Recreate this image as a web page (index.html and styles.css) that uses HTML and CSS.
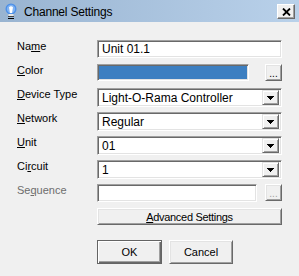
FILE: index.html
```html
<!DOCTYPE html>
<html>
<head>
<meta charset="utf-8">
<link rel="stylesheet" href="styles.css">
</head>
<body>
<div class="window">
  <div class="titlebar">
    <svg class="appicon" width="12" height="17" viewBox="0 0 12 17">
      <circle cx="6" cy="6" r="5.5" fill="#4b8fe8"/>
      <circle cx="6" cy="6" r="4.2" fill="#7fb2f2"/>
      <path d="M4 4.2 Q6 2.2 8 4.2 L7 10 H5 Z" fill="#fff"/>
      <rect x="3.5" y="11" width="5" height="2" fill="#e6e6e6"/>
      <rect x="3" y="13" width="6" height="1" fill="#444"/>
      <rect x="3" y="15" width="6" height="1" fill="#000"/>
    </svg>
    <span class="title">Channel Settings</span>
    <button class="closebtn" type="button">
      <svg width="9" height="8" viewBox="0 0 9 8"><path d="M1 0.5 L8 7.5 M8 0.5 L1 7.5" stroke="#000" stroke-width="1.8"/></svg>
    </button>
  </div>

  <div class="form">
    <div class="label">Na<u>m</u>e</div>
    <div class="field text h18"><span>Unit 01.1</span></div>

    <div class="label"><u>C</u>olor</div>
    <div class="pair">
      <div class="field swatch"></div>
      <div class="btn small">...</div>
    </div>

    <div class="label"><u>D</u>evice Type</div>
    <div class="field select"><span class="val">Light-O-Rama Controller</span><span class="drop"><svg width="7" height="4" viewBox="0 0 7 4" shape-rendering="crispEdges"><rect x="0" y="0" width="7" height="1"/><rect x="1" y="1" width="5" height="1"/><rect x="2" y="2" width="3" height="1"/><rect x="3" y="3" width="1" height="1"/></svg></span></div>

    <div class="label"><u>N</u>etwork</div>
    <div class="field select"><span class="val">Regular</span><span class="drop"><svg width="7" height="4" viewBox="0 0 7 4" shape-rendering="crispEdges"><rect x="0" y="0" width="7" height="1"/><rect x="1" y="1" width="5" height="1"/><rect x="2" y="2" width="3" height="1"/><rect x="3" y="3" width="1" height="1"/></svg></span></div>

    <div class="label"><u>U</u>nit</div>
    <div class="field select"><span class="val">01</span><span class="drop"><svg width="7" height="4" viewBox="0 0 7 4" shape-rendering="crispEdges"><rect x="0" y="0" width="7" height="1"/><rect x="1" y="1" width="5" height="1"/><rect x="2" y="2" width="3" height="1"/><rect x="3" y="3" width="1" height="1"/></svg></span></div>

    <div class="label">Ci<u>r</u>cuit</div>
    <div class="field select"><span class="val">1</span><span class="drop"><svg width="7" height="4" viewBox="0 0 7 4" shape-rendering="crispEdges"><rect x="0" y="0" width="7" height="1"/><rect x="1" y="1" width="5" height="1"/><rect x="2" y="2" width="3" height="1"/><rect x="3" y="3" width="1" height="1"/></svg></span></div>

    <div class="label disabled">Se<u>q</u>uence</div>
    <div class="pair">
      <div class="field text seq"></div>
      <div class="btn small disabledbtn">...</div>
    </div>

    <div></div>
    <div class="btn wide"><u>A</u>dvanced Settings</div>
  </div>

  <div class="actions">
    <div class="btn action default">OK</div>
    <div class="btn action">Cancel</div>
  </div>
</div>
</body>
</html>
```

FILE: styles.css
```css
html, body {
  margin: 0;
  padding: 0;
  background: #f0f0f0;
}
body {
  width: 299px;
  height: 276px;
  overflow: hidden;
  font-family: "Liberation Sans", Arial, sans-serif;
  font-size: 11px;
  color: #000;
}
.window {
  width: 299px;
  height: 276px;
  background: #f0f0f0;
}
.titlebar {
  height: 22px;
  display: flex;
  align-items: center;
  background: linear-gradient(to right, #99b4d1, #b9d1ea);
  position: relative;
}
.appicon {
  margin-left: 5px;
  margin-top: 1px;
}
.title {
  margin-left: 7px;
  padding-top: 2px;
  font-size: 12px;
  letter-spacing: -0.2px;
}
.closebtn {
  position: absolute;
  left: 277px;
  top: 4px;
  width: 18px;
  height: 15px;
  padding: 0;
  margin: 0;
  background: #f0f0f0;
  border: 1px solid;
  border-color: #fff #696969 #696969 #fff;
  box-shadow: inset -1px -1px #a0a0a0;
  display: flex;
  align-items: center;
  justify-content: center;
}
.form {
  display: grid;
  grid-template-columns: 80px 185px;
  grid-template-rows: repeat(7, 24px) 17px;
  align-items: start;
  padding: 18px 0 0 17px;
}
.label {
  line-height: 13px;
  padding-top: 0;
  white-space: nowrap;
}
.label.disabled {
  color: #6d6d6d;
}
u {
  text-decoration: underline;
  text-underline-offset: 1px;
}
.field {
  box-sizing: border-box;
  background: #fff;
  border: 1px solid;
  border-color: #a0a0a0 #fff #fff #a0a0a0;
  box-shadow: inset 1px 1px #696969, inset -1px -1px #e3e3e3;
  font-family: "Liberation Sans Narrow", "Liberation Sans", Arial, sans-serif;
  font-stretch: condensed;
  font-size: 12px;
  display: flex;
  align-items: center;
}
.text {
  width: 185px;
  padding-left: 4px;
}
.h18 { height: 18px; }
.seq {
  width: 160px;
  height: 18px;
}
.swatch {
  width: 152px;
  height: 17px;
  background: #3d7fc1;
}
.select {
  width: 185px;
  height: 19px;
  padding: 2px 2px 2px 4px;
}
.select .val {
  flex: 1;
}
.drop {
  box-sizing: border-box;
  width: 17px;
  height: 15px;
  background: #f0f0f0;
  border: 1px solid;
  border-color: #e3e3e3 #696969 #696969 #e3e3e3;
  box-shadow: inset 1px 1px #fff, inset -1px -1px #a0a0a0;
  display: flex;
  align-items: center;
  justify-content: center;
  padding-top: 1px;
}
.pair {
  display: flex;
  justify-content: space-between;
  width: 185px;
}
.btn {
  box-sizing: border-box;
  background: #f0f0f0;
  border: 1px solid;
  border-color: #fff #696969 #696969 #fff;
  box-shadow: inset 1px 1px #e3e3e3, inset -1px -1px #a0a0a0;
  display: flex;
  align-items: center;
  justify-content: center;
  white-space: nowrap;
}
.small {
  width: 17px;
  height: 17px;
  font-size: 10px;
  line-height: 10px;
  padding-top: 2px;
}
.disabledbtn {
  color: #a0a0a0;
}
.wide {
  width: 185px;
  height: 17px;
  letter-spacing: -0.3px;
}
.actions {
  display: flex;
  gap: 7px;
  margin-top: 15px;
  padding-left: 97px;
}
.action {
  width: 64px;
  height: 24px;
}
.default {
  width: 65px;
  border: 1px solid #646464;
  box-shadow: inset 1px 1px #fff, inset -1px -1px #696969, inset -2px -2px #a0a0a0;
}
```
